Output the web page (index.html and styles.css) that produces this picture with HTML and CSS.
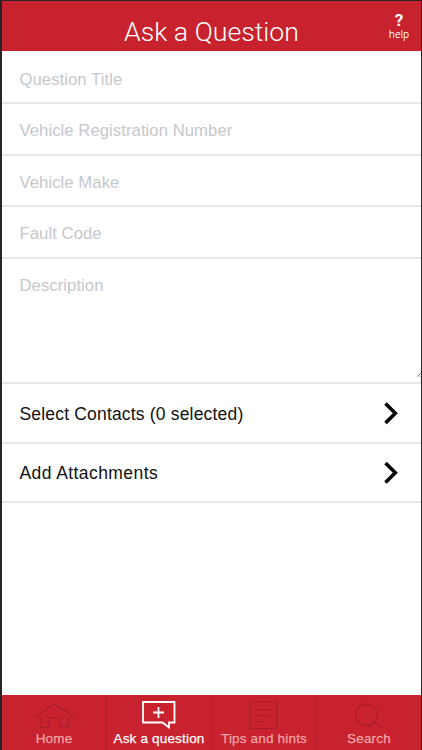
FILE: index.html
```html
<!DOCTYPE html>
<html lang="en">
<head>
<meta charset="utf-8">
<title>Ask a Question</title>
<link rel="stylesheet" href="styles.css">
</head>
<body>
<div class="app">
  <header class="header">
    <h1 class="title">Ask a Question</h1>
    <div class="help"><span class="mark">?</span><span class="help-label">help</span></div>
  </header>
  <main class="form">
    <div class="field">Question Title</div>
    <div class="field">Vehicle Registration Number</div>
    <div class="field">Vehicle Make</div>
    <div class="field">Fault Code</div>
    <div class="field description">Description
      <svg class="grip" width="4" height="4" viewBox="0 0 4 4"><path d="M.5 3.5 3.5.5M2.8 3.7l.9-.9" stroke="#666" fill="none"/></svg>
    </div>
    <div class="row"><span class="contacts">Select Contacts (0 selected)</span>
      <svg class="chevron" width="14" height="24" viewBox="0 0 14 24"><path d="M1.5 2.500 11.300 12.300 1.500 22.100" /></svg>
    </div>
    <div class="row"><span class="attachments">Add Attachments</span>
      <svg class="chevron" width="14" height="24" viewBox="0 0 14 24"><path d="M1.5 3 11.300 12.800 1.500 22.600" /></svg>
    </div>
  </main>
  <nav class="tabs">
    <div class="tab">
      <svg class="icon" width="42" height="30" viewBox="0 0 42 30"><path d="M2 17 21.500 4 41 17M8 17v10.500h8v-9.500h11v9.500H35.500V17"/></svg>
      <span>Home</span>
    </div>
    <div class="tab active">
      <svg class="icon" width="42" height="30" viewBox="0 0 42 30"><path d="M5 2H36.500V22.500H31V27.500L24.500 22.500H5ZM20.500 7v11M15 12.500h11"/></svg>
      <span>Ask a question</span>
    </div>
    <div class="tab">
      <svg class="icon" width="42" height="30" viewBox="0 0 42 30"><path d="M7.500 2H33.500V28.500H7.500ZM11.500 9.500h18M11.500 15.500h15M11.500 21.500h9"/></svg>
      <span>Tips and hints</span>
    </div>
    <div class="tab">
      <svg class="icon" width="42" height="30" viewBox="0 0 42 30"><circle cx="18.500" cy="15" r="10.800"/><path d="M26.500 22.500 34 27.500"/></svg>
      <span>Search</span>
    </div>
  </nav>
</div>
</body>
</html>
```
FILE: styles.css
```css
* { box-sizing: border-box; }
body { margin: 0; background: #fff; font-family: "Liberation Sans", Arial, sans-serif; }
.app { width: 422px; height: 750px; display: flex; flex-direction: column; border: solid #2b2427; border-width: 1px 1px 0 2px; overflow: hidden; }
.header { height: 50px; flex: none; background: #c8222e; color: #fff; position: relative; display: flex; justify-content: center; }
.title { margin: 15px 0 0; font: 300 26.7px/32px Roboto, sans-serif; white-space: nowrap; }
.help { position: absolute; right: 11px; top: 10px; width: 22px; display: flex; flex-direction: column; align-items: center; font-family: "Open Sans", sans-serif; }
.mark { font: 700 17px/18px Roboto, sans-serif; }
.help-label { font-size: 10px; line-height: 10px; }
.form { flex: 1; }
.field { height: 51.7px; padding: 0 0 0 17.5px; border-bottom: 2px solid #e8e8ea; color: #c5c8cc; font-size: 16.7px; letter-spacing: .05px; line-height: 54px; position: relative; white-space: nowrap; }
.field:first-child { height: 53px; line-height: 57px; }
.description { height: 125px; }
.grip { position: absolute; right: 0; bottom: 5px; }
.row { height: 59.5px; padding: 0 23px 0 17.5px; border-bottom: 2px solid #e8e8ea; display: flex; align-items: center; justify-content: space-between; font-size: 17.5px; color: #111; white-space: nowrap; }
.row span { padding-top: 3px; }
.contacts { letter-spacing: .18px; }
.attachments { letter-spacing: .42px; }
.chevron path { fill: none; stroke: #050505; stroke-width: 3.6; }
.tabs { height: 55px; flex: none; display: flex; background: #c8222e; }
.tab { flex: 1; padding-top: 5px; display: flex; flex-direction: column; align-items: center; color: #f0a4a8; font-size: 13.5px; letter-spacing: .18px; line-height: 17px; white-space: nowrap; border-left: 1px solid #b51f2b; }
.tab:first-child { border-left: 0; }
.tab span { -webkit-text-stroke: .25px currentColor; }
.icon { fill: none; stroke: #a91d28; stroke-width: 1.2; }
.active { color: #fff; }
.active .icon { stroke: #fff; stroke-width: 1.8; }
```
